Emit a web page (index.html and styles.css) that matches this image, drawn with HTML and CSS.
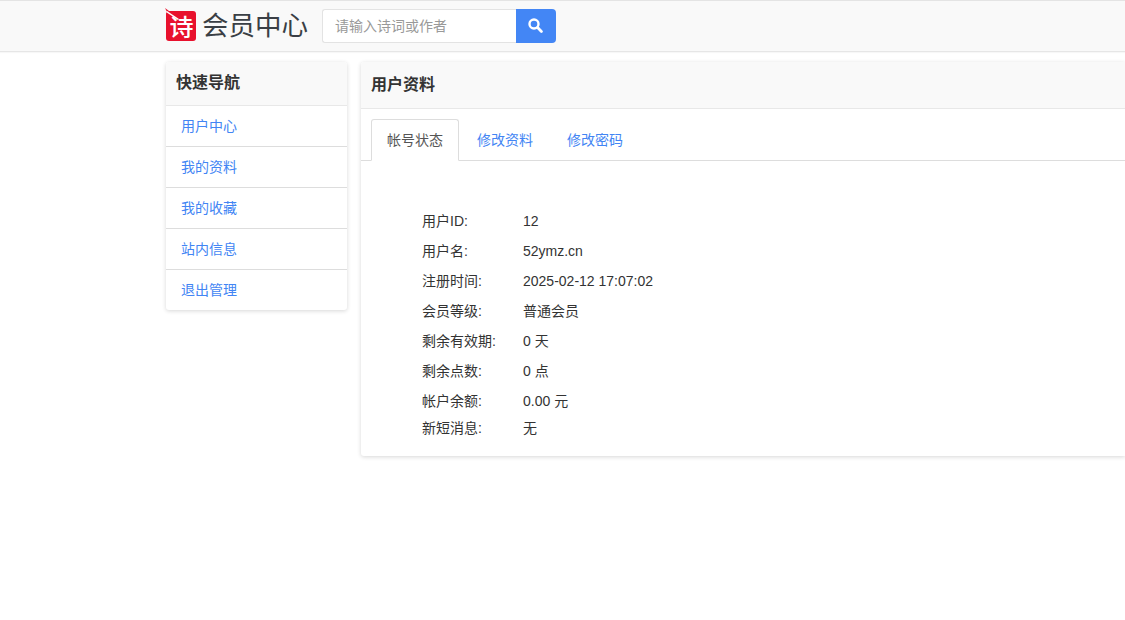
FILE: index.html
```html
<!DOCTYPE html>
<html lang="zh-CN">
<head>
    <meta charset="UTF-8">
    <title>会员中心</title>
    <link rel="stylesheet" href="styles.css">
</head>
<body>

<div class="header">
    <div class="header-in">
        <div class="logo">
            <svg class="logo-brush" width="30" height="30" viewBox="0 0 30 30"><path d="M-1 -3 L3 0 L1 1 Z" fill="#e8112d"/><path d="M1 0 L13 8 L12 9 L0 1 Z" fill="#fff"/></svg>
            <span class="logo-text">诗</span>
        </div>
        <div class="site-name">会员中心</div>
        <div class="search">
            <input class="search-input" type="text" placeholder="请输入诗词或作者">
            <button class="search-btn" type="button">
                <svg width="15" height="15" viewBox="0 0 15 15"><circle cx="6" cy="6" r="4.5" fill="none" stroke="#fff" stroke-width="2.4"/><path d="M9.6 9.6 L13.4 13.4" stroke="#fff" stroke-width="2.8" stroke-linecap="round"/></svg>
            </button>
        </div>
    </div>
</div>

<div class="wrap">
    <div class="side">
        <div class="side-title">快速导航</div>
        <a class="side-link" href="#">用户中心</a>
        <a class="side-link" href="#">我的资料</a>
        <a class="side-link" href="#">我的收藏</a>
        <a class="side-link" href="#">站内信息</a>
        <a class="side-link" href="#">退出管理</a>
    </div>

    <div class="main">
        <div class="main-title">用户资料</div>
        <div class="tabs-box">
            <div class="tabs">
                <a class="tab active" href="#">帐号状态</a>
                <a class="tab" href="#">修改资料</a>
                <a class="tab" href="#">修改密码</a>
            </div>
        </div>
        <div class="info">
            <div class="row"><span class="label">用户ID:</span><span>12</span></div>
            <div class="row"><span class="label">用户名:</span><span>52ymz.cn</span></div>
            <div class="row"><span class="label">注册时间:</span><span>2025-02-12 17:07:02</span></div>
            <div class="row"><span class="label">会员等级:</span><span>普通会员</span></div>
            <div class="row"><span class="label">剩余有效期:</span><span>0 天</span></div>
            <div class="row"><span class="label">剩余点数:</span><span>0 点</span></div>
            <div class="row"><span class="label">帐户余额:</span><span>0.00 元</span></div>
            <div class="row last"><span class="label">新短消息:</span><span>无</span></div>
        </div>
    </div>
</div>

</body>
</html>
```

FILE: styles.css
```css
* { margin: 0; padding: 0; box-sizing: border-box; }
body { background: #fff; color: #333; font-family: "Liberation Sans", "Noto Sans CJK SC", sans-serif; font-size: 14px; }
a { color: #4285f4; text-decoration: none; }

/**** header ****/
.header { height: 52px; background: #f9f9f9; border-top: 1px solid #e4e4e4; border-bottom: 1px solid #e6e6e6; box-shadow: 0 1px 1px rgba(0,0,0,.03); }
.header-in { display: flex; align-items: center; height: 50px; padding-left: 166px; }
.logo { position: relative; display: flex; align-items: center; justify-content: center; width: 30px; height: 30px; border-radius: 3px; background: #e8112d; }
.logo-brush { position: absolute; left: 0; top: 0; overflow: visible; }
.logo-text { padding: 4px 0 0 1px; color: #fff; font-size: 24px; font-weight: 500; line-height: 1; }
.site-name { width: 120px; margin-left: 6px; color: #3a3f45; font-size: 26.5px; line-height: 34px; white-space: nowrap; }
.search { display: flex; height: 34px; }
.search-input { width: 194px; height: 34px; padding: 0 12px; border: 1px solid #e3e3e3; border-right: 0; border-radius: 3px 0 0 3px; background: #fff; font: 14px "Liberation Sans", "Noto Sans CJK SC", sans-serif; outline: none; }
.search-input::placeholder { color: #999; opacity: 1; }
.search-btn { display: flex; align-items: center; justify-content: center; width: 40px; height: 34px; padding: 0 2px 2px 0; border: 0; border-radius: 0 4px 4px 0; background: #4386f5; }

/**** layout ****/
.wrap { display: flex; align-items: flex-start; gap: 14px; padding: 10px 0 10px 166px; }
.side { width: 181px; flex: none; border-radius: 3px; background: #fff; box-shadow: 0 1px 4px rgba(0,0,0,.16); }
.side-title { height: 44px; padding-left: 10px; border-bottom: 1px solid #e8e8e8; border-radius: 3px 3px 0 0; background: #f9f9f9; color: #333; font-size: 16px; font-weight: 700; line-height: 41px; }
.side-link { display: block; height: 41px; padding-left: 15px; border-bottom: 1px solid #ddd; font-size: 14px; line-height: 41px; }
.side-title + .side-link { line-height: 40px; }
.side-link:last-child { height: 40px; border-bottom: 0; }

/**** main ****/
.main { flex: 1; height: 394px; border-radius: 3px 0 0 3px; background: #fff; box-shadow: 0 1px 4px rgba(0,0,0,.16); }
.main-title { height: 47px; padding-left: 10px; border-bottom: 1px solid #e8e8e8; border-radius: 3px 0 0 0; background: #f9f9f9; color: #333; font-size: 16px; font-weight: 700; line-height: 45px; }
.tabs-box { padding: 10px 0 0 10px; border-bottom: 1px solid #ddd; }
.tabs { display: flex; margin-bottom: -1px; }
.tab { height: 42px; padding: 0 16px; border: 1px solid transparent; font-size: 14px; line-height: 40px; }
.tab.active { padding: 0 15px; margin-right: 1px; border-color: #ddd #ddd #fff; border-radius: 3px 3px 0 0; background: #fff; color: #555; }
.info { padding: 45px 0 0 61px; }
.row { display: flex; height: 30px; color: #333; line-height: 30px; }
.row.last { height: 27px; margin-top: -3px; }
.label { width: 101px; flex: none; }
```
